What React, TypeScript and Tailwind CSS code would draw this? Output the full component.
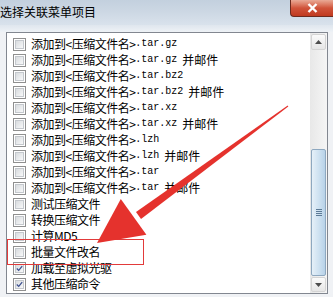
import React from "react";

type Item = { name: string; suffix?: string; mail?: boolean; checked?: boolean };

const items: Item[] = [
  { name: "添加到<压缩文件名>", suffix: ".tar.gz" },
  { name: "添加到<压缩文件名>", suffix: ".tar.gz", mail: true },
  { name: "添加到<压缩文件名>", suffix: ".tar.bz2" },
  { name: "添加到<压缩文件名>", suffix: ".tar.bz2", mail: true },
  { name: "添加到<压缩文件名>", suffix: ".tar.xz" },
  { name: "添加到<压缩文件名>", suffix: ".tar.xz", mail: true },
  { name: "添加到<压缩文件名>", suffix: ".lzh" },
  { name: "添加到<压缩文件名>", suffix: ".lzh", mail: true },
  { name: "添加到<压缩文件名>", suffix: ".tar" },
  { name: "添加到<压缩文件名>", suffix: ".tar", mail: true },
  { name: "测试压缩文件" },
  { name: "转换压缩文件" },
  { name: "计算MD5" },
  { name: "批量文件改名" },
  { name: "加载至虚拟光驱", checked: true },
  { name: "其他压缩命令", checked: true },
];

function CheckBox({ checked }: { checked?: boolean }) {
  return (
    <div className="flex h-[13px] w-[13px] shrink-0 items-center justify-center border border-[#8f8f8f] bg-white">
      <div className="flex h-[9px] w-[9px] items-center justify-center border border-[#c4c8cd] bg-gradient-to-br from-[#d9dcdf] to-[#f7f8f9]">
        {checked && (
          <svg width="9" height="9" viewBox="0 0 9 9">
            <path d="M1 4.5 L3.5 7 L8 1.5" fill="none" stroke="#3c4f8f" strokeWidth="1.6" />
          </svg>
        )}
      </div>
    </div>
  );
}

function Row({ item }: { item: Item }) {
  return (
    <div className="flex h-[16px] items-center gap-[5px] whitespace-nowrap">
      <CheckBox checked={item.checked} />
      <span className="flex items-center text-[12px] leading-none text-black">
        <span className="tracking-[-0.5px]">{item.name}</span>
        {item.suffix && (
          <span className="font-['Liberation_Mono',monospace] text-[10px]">{item.suffix}</span>
        )}
        {item.mail && <span className="ml-[5px]">并邮件</span>}
      </span>
    </div>
  );
}

function ScrollBar() {
  return (
    <div className="flex w-[17px] flex-col bg-gradient-to-r from-[#e8e8e8] to-[#f5f5f5]">
      <div className="m-[1px] flex h-[16px] items-center justify-center rounded-[2px] border border-[#d4d4d4] bg-gradient-to-b from-[#fbfbfb] to-[#e6e6e6]">
        <svg width="7" height="4" viewBox="0 0 7 4">
          <path d="M0 4 L3.5 0 L7 4 Z" fill="#4d4d4d" />
        </svg>
      </div>
      <div className="flex-1" />
      <div className="mx-[1px] flex h-[127px] items-center justify-center rounded-[2px] border border-[#8ea8c0] bg-gradient-to-r from-[#e6f0f8] via-[#cfe2f1] to-[#b8d2e8]">
        <div className="flex flex-col gap-[1px]">
          <div className="h-px w-[6px] bg-[#5c7a96]" />
          <div className="h-px w-[6px] bg-[#5c7a96]" />
          <div className="h-px w-[6px] bg-[#5c7a96]" />
          <div className="h-px w-[6px] bg-[#5c7a96]" />
        </div>
      </div>
      <div className="m-[1px] flex h-[15px] items-center justify-center rounded-[2px] border border-[#d4d4d4] bg-gradient-to-b from-[#fbfbfb] to-[#e6e6e6]">
        <svg width="7" height="4" viewBox="0 0 7 4">
          <path d="M0 0 L3.5 4 L7 0 Z" fill="#4d4d4d" />
        </svg>
      </div>
    </div>
  );
}

export default function App() {
  return (
    <div className="relative h-[297px] w-[333px] overflow-hidden bg-[#e3e9f0] font-['Noto_Sans_CJK_SC',sans-serif]">
      <div className="flex h-[25px] items-start justify-between bg-gradient-to-b from-[#c3d0de] via-[#cdd8e4] to-[#d9e2ec]">
        <span className="pt-[4px] text-[12px] leading-[16px] text-black">选择关联菜单项目</span>
        <div className="flex h-[17px] w-[43px] items-center justify-center rounded-bl-[4px] border border-t-0 border-r-0 border-[#6d2a1e] bg-gradient-to-b from-[#e9a996] via-[#d0533a] to-[#c0391f]">
          <svg width="11" height="10" viewBox="0 0 11 10">
            <path d="M1.5 1 L9.5 9 M9.5 1 L1.5 9" stroke="#ffffff" strokeWidth="2.4" />
          </svg>
        </div>
      </div>
      <div className="h-[7px] bg-gradient-to-b from-[#dfe6ee] to-[#eef2f6]" />
      <div className="bg-[#f0f2f5] pb-[3px] pl-[6px] pr-[5px]">
        <div className="flex h-[262px] border border-[#828790] bg-white">
          <div className="flex-1 pl-[6px] pt-[3px]">
            {items.map((item, i) => (
              <Row key={i} item={item} />
            ))}
          </div>
          <ScrollBar />
        </div>
      </div>

      <div className="absolute left-[7px] top-[239px] h-[26px] w-[137px] border border-[#e23a3a]" />

      <svg className="absolute left-0 top-0" width="333" height="297" viewBox="0 0 333 297">
        <polygon points="288.3,106.4 287.7,105.6 136,212 141,219" fill="#e5322d" />
        <polygon points="97,243 120.8,198.9 146.4,234.7" fill="#e5322d" />
      </svg>
    </div>
  );
}
